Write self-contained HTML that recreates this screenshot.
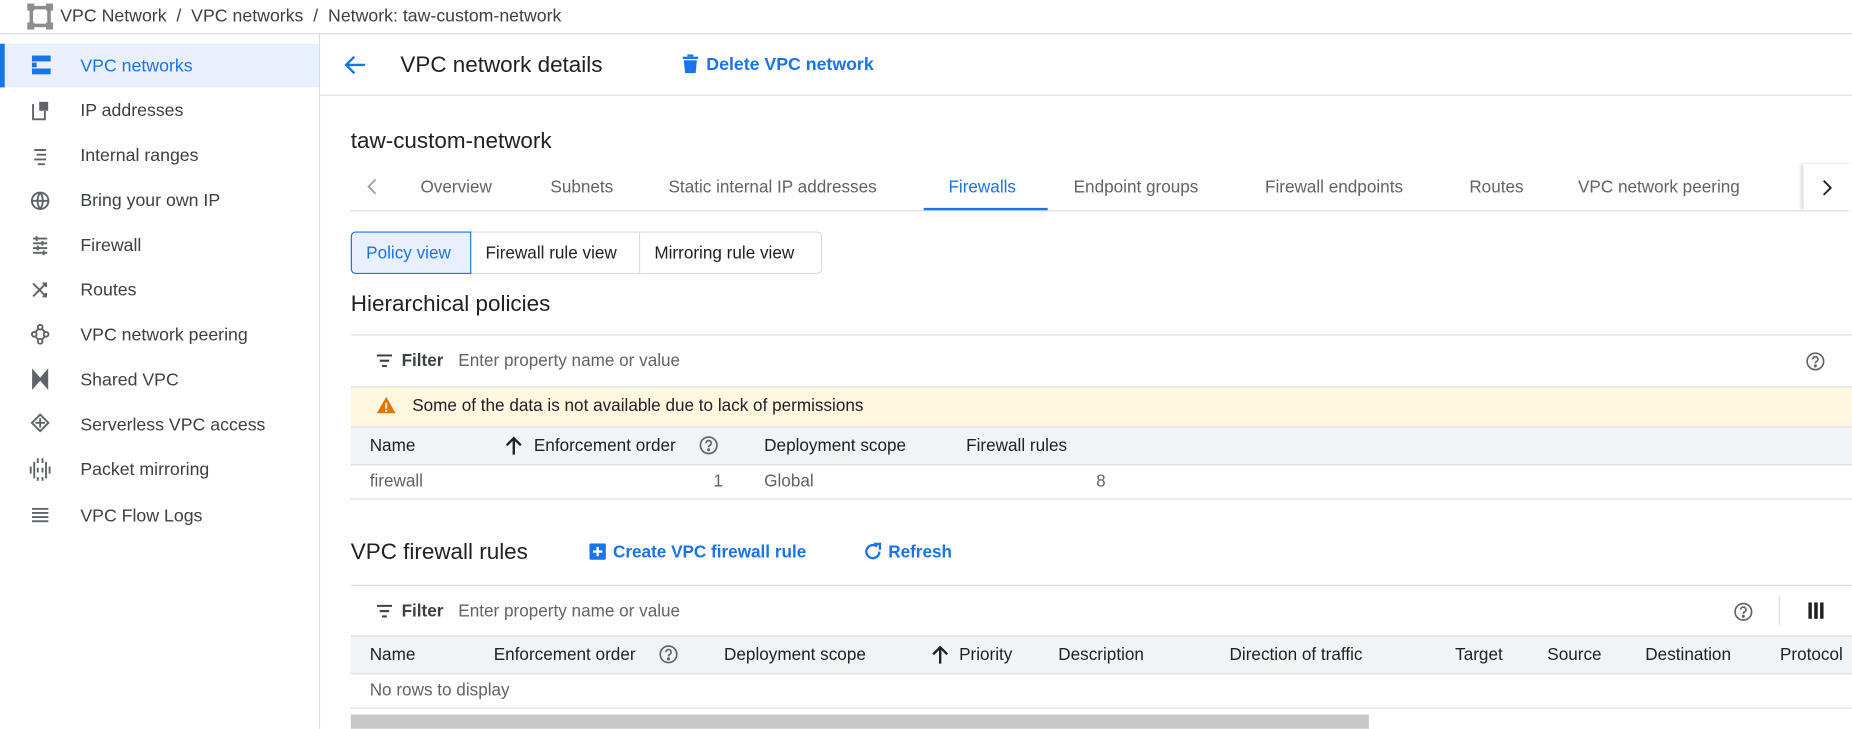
<!DOCTYPE html>
<html><head><meta charset="utf-8"><style>
html,body{margin:0;padding:0;width:1852px;height:728px;overflow:hidden;background:#fff}
#w{position:absolute;left:0;top:0;width:1568px;height:617px;transform:scale(1.18112);transform-origin:0 0;font-family:"Liberation Sans",Arial,sans-serif;color:#202124;font-size:14.5px}
.a{position:absolute;white-space:nowrap}
.c{transform:translateY(-45%)}
.hl{position:absolute;height:1px;background:#dadce0}
.blue{color:#1a73e8}
.g{color:#5f6368}
svg{display:block}
</style></head><body><div id="w">
<!-- breadcrumb -->
<svg class="a" style="left:23px;top:3px" width="22" height="22" viewBox="0 0 22 22"><g fill="#8a8d91"><rect x="0" y="0" width="6" height="6"/><rect x="16" y="0" width="6" height="6"/><rect x="0" y="16" width="6" height="6"/><rect x="16" y="16" width="6" height="6"/><rect x="2" y="5" width="3" height="12"/><rect x="17" y="5" width="3" height="12"/><rect x="5" y="2" width="12" height="3"/><rect x="5" y="17" width="12" height="3"/></g></svg>
<div class="a c" style="left:51px;top:13px;font-size:15px;color:#3c4043">VPC Network &nbsp;/&nbsp; VPC networks &nbsp;/&nbsp; Network: taw-custom-network</div>
<div class="hl" style="left:0;top:28px;width:1568px"></div>
<!-- sidebar -->
<div class="a" style="left:0;top:29px;width:270px;height:588px;border-right:1px solid #dadce0"></div>
<div class="a" style="left:0;top:37px;width:270px;height:37px;background:#e8f0fe"></div>
<div class="a" style="left:0;top:37px;width:4px;height:37px;background:#1a73e8"></div>
<svg class="a" style="left:27px;top:47px" width="16" height="16" viewBox="0 0 16 16"><g fill="#1a73e8"><rect x="0" y="0" width="16" height="5"/><rect x="0" y="6" width="4" height="4"/><rect x="0" y="11" width="16" height="5"/></g></svg>
<div class="a c blue" style="left:68px;top:55px;font-size:15px">VPC networks</div>
<div class="a c" style="left:68px;top:93px;font-size:15px;color:#3c4043">IP addresses</div>
<div class="a c" style="left:68px;top:131px;font-size:15px;color:#3c4043">Internal ranges</div>
<div class="a c" style="left:68px;top:169px;font-size:15px;color:#3c4043">Bring your own IP</div>
<div class="a c" style="left:68px;top:207px;font-size:15px;color:#3c4043">Firewall</div>
<div class="a c" style="left:68px;top:245px;font-size:15px;color:#3c4043">Routes</div>
<div class="a c" style="left:68px;top:283px;font-size:15px;color:#3c4043">VPC network peering</div>
<div class="a c" style="left:68px;top:321px;font-size:15px;color:#3c4043">Shared VPC</div>
<div class="a c" style="left:68px;top:359px;font-size:15px;color:#3c4043">Serverless VPC access</div>
<div class="a c" style="left:68px;top:397px;font-size:15px;color:#3c4043">Packet mirroring</div>
<div class="a c" style="left:68px;top:436px;font-size:15px;color:#3c4043">VPC Flow Logs</div>
<svg class="a" style="left:25px;top:85px" width="18" height="330" viewBox="0 0 18 330" fill="none" stroke="#5f6368" stroke-width="1.6">
<path d="M3 3v13h10V9M9 2h6v6H9z" /><rect x="10" y="3" width="4" height="4" fill="#5f6368"/>
<path d="M4 42h10M6 46h8M4 50h10M7 54h6"/>
<circle cx="9" cy="85" r="7"/><path d="M2 85h14M9 78c-3 4-3 10 0 14M9 78c3 4 3 10 0 14"/>
<path d="M3 117h12M3 121h12M3 125h12M3 129h12M6 115v4M11 119v4M7 123v4M12 127v4"/>
<path d="M3 155l11 11M14 155l-11 11M11 155h3v3M11 166h3v-3"/>
<circle cx="9" cy="192" r="2"/><circle cx="4" cy="198" r="2"/><circle cx="14" cy="198" r="2"/><circle cx="9" cy="204" r="2"/><path d="M5 196l3-3M13 196l-3-3M5 200l3 3M13 200l-3 3"/>
<path d="M3 229v14l6-7zM15 229v14l-6-7z" fill="#5f6368"/>
<path d="M9 266l7 7-7 7-7-7zM5 273h8M9 269v8"/>
<path d="M1 310v6M4 306v14M7 303v4M7 311v4M7 319v3M11 303v4M11 311v4M11 319v3M14 306v14M17 310v6"/>
</svg>
<svg class="a" style="left:27px;top:430px" width="14" height="13" viewBox="0 0 14 13"><g fill="#5f6368"><rect y="0" width="14" height="1.6"/><rect y="3.5" width="14" height="1.6"/><rect y="7" width="14" height="1.6"/><rect y="10.5" width="14" height="1.6"/></g></svg>
<!-- header -->
<svg class="a" style="left:291px;top:46px" width="19" height="18" viewBox="0 0 19 18" fill="none" stroke="#1a73e8" stroke-width="2"><path d="M18 9H2M9 2L2 9l7 7"/></svg>
<div class="a c" style="left:339px;top:55px;font-size:19px">VPC network details</div>
<svg class="a" style="left:578px;top:46px" width="13" height="16" viewBox="0 0 13 16" fill="#1a73e8"><rect x="0" y="2" width="13" height="2"/><rect x="4" y="0" width="5" height="2"/><path d="M1 5h11l-1 11H2z"/></svg>
<div class="a c blue" style="left:598px;top:54px;font-size:15px;font-weight:bold">Delete VPC network</div>
<div class="hl" style="left:271px;top:80px;width:1297px"></div>
<div class="a c" style="left:297px;top:119px;font-size:19px">taw-custom-network</div>
<!-- tabs -->
<svg class="a" style="left:311px;top:151px" width="8" height="14" viewBox="0 0 8 14" fill="none" stroke="#9aa0a6" stroke-width="1.5"><path d="M7 1L1 7l6 6"/></svg>
<div class="a c g" style="left:356px;top:158px">Overview</div>
<div class="a c g" style="left:466px;top:158px">Subnets</div>
<div class="a c g" style="left:566px;top:158px">Static internal IP addresses</div>
<div class="a c blue" style="left:803px;top:158px">Firewalls</div>
<div class="a c g" style="left:909px;top:158px">Endpoint groups</div>
<div class="a c g" style="left:1071px;top:158px">Firewall endpoints</div>
<div class="a c g" style="left:1244px;top:158px">Routes</div>
<div class="a c g" style="left:1336px;top:158px">VPC network peering</div>
<div class="a" style="left:1527px;top:139px;width:41px;height:39px;background:#fff;box-shadow:-2px 0 3px rgba(0,0,0,.15)"></div>
<svg class="a" style="left:1543px;top:152px" width="8" height="14" viewBox="0 0 8 14" fill="none" stroke="#202124" stroke-width="1.6"><path d="M1 1l6 6-6 6"/></svg>
<div class="hl" style="left:297px;top:178px;width:1268px"></div>
<div class="a" style="left:782px;top:176px;width:105px;height:2px;background:#1a73e8"></div>
<!-- segmented -->
<div class="a" style="left:297px;top:196px;width:397px;height:34px;border:1px solid #dadce0;border-radius:4px"></div>
<div class="a" style="left:297px;top:196px;width:100px;height:34px;border:1px solid #1a73e8;background:#e8f0fe;border-radius:4px 0 0 4px"></div>
<div class="a" style="left:541px;top:197px;width:1px;height:34px;background:#dadce0"></div>
<div class="a c blue" style="left:310px;top:214px">Policy view</div>
<div class="a c" style="left:411px;top:214px">Firewall rule view</div>
<div class="a c" style="left:554px;top:214px">Mirroring rule view</div>
<div class="a c" style="left:297px;top:257px;font-size:19px">Hierarchical policies</div>
<!-- filter 1 -->
<div class="hl" style="left:297px;top:283px;width:1271px"></div>
<svg class="a" style="left:319px;top:300px" width="13" height="11" viewBox="0 0 13 11"><g fill="#3c4043"><rect width="13" height="1.8"/><rect x="2.5" y="4.5" width="8" height="1.8"/><rect x="4.5" y="9" width="4" height="1.8"/></g></svg>
<div class="a c" style="left:340px;top:305px;font-weight:bold;color:#3c4043">Filter</div>
<div class="a c g" style="left:388px;top:305px">Enter property name or value</div>
<svg class="a" style="left:1529px;top:298px" width="16" height="16" viewBox="0 0 16 16" fill="none" stroke="#5f6368" stroke-width="1.4"><circle cx="8" cy="8" r="7"/><path d="M5.8 6.2a2.2 2.2 0 1 1 3 2c-.7.3-.8.8-.8 1.5"/><circle cx="8" cy="11.8" r=".6" fill="#5f6368"/></svg>
<div class="a" style="left:297px;top:327px;width:1271px;height:34px;background:#fef7e0;border-top:1px solid #dadce0"></div>
<svg class="a" style="left:319px;top:336px" width="16" height="14" viewBox="0 0 16 14"><path d="M8 0l8 14H0z" fill="#e37400"/><rect x="7.2" y="5" width="1.6" height="5" fill="#fff"/><rect x="7.2" y="11" width="1.6" height="1.6" fill="#fff"/></svg>
<div class="a c" style="left:349px;top:343px">Some of the data is not available due to lack of permissions</div>
<div class="a" style="left:297px;top:361px;width:1271px;height:31px;background:#f1f3f4;border-top:1px solid #dadce0;border-bottom:1px solid #dadce0"></div>
<div class="a c" style="left:313px;top:377px">Name</div>
<svg class="a" style="left:428px;top:369px" width="14" height="16" viewBox="0 0 14 16" fill="none" stroke="#202124" stroke-width="2"><path d="M7 16V2M1 8l6-6 6 6"/></svg>
<div class="a c" style="left:452px;top:377px">Enforcement order</div>
<svg class="a" style="left:592px;top:369px" width="16" height="16" viewBox="0 0 16 16" fill="none" stroke="#5f6368" stroke-width="1.4"><circle cx="8" cy="8" r="7"/><path d="M5.8 6.2a2.2 2.2 0 1 1 3 2c-.7.3-.8.8-.8 1.5"/><circle cx="8" cy="11.8" r=".6" fill="#5f6368"/></svg>
<div class="a c" style="left:647px;top:377px">Deployment scope</div>
<div class="a c" style="left:818px;top:377px">Firewall rules</div>
<div class="a c g" style="left:313px;top:407px">firewall</div>
<div class="a c g" style="left:604px;top:407px">1</div>
<div class="a c g" style="left:647px;top:407px">Global</div>
<div class="a c g" style="left:928px;top:407px">8</div>
<div class="hl" style="left:297px;top:422px;width:1271px"></div>
<!-- VPC firewall rules -->
<div class="a c" style="left:297px;top:467px;font-size:19px">VPC firewall rules</div>
<svg class="a" style="left:499px;top:460px" width="14" height="14" viewBox="0 0 14 14"><rect width="14" height="14" rx="1.5" fill="#1a73e8"/><path d="M7 3v8M3 7h8" stroke="#fff" stroke-width="2"/></svg>
<div class="a c blue" style="left:519px;top:467px;font-weight:bold">Create VPC firewall rule</div>
<svg class="a" style="left:731px;top:459px" width="16" height="16" viewBox="0 0 16 16" fill="none" stroke="#1a73e8" stroke-width="2"><path d="M13.5 8A5.5 5.5 0 1 1 11.5 3.8"/><path d="M9 1.5h5v5" fill="none"/></svg>
<div class="a c blue" style="left:752px;top:467px;font-weight:bold">Refresh</div>
<div class="hl" style="left:297px;top:495px;width:1271px"></div>
<svg class="a" style="left:319px;top:512px" width="13" height="11" viewBox="0 0 13 11"><g fill="#3c4043"><rect width="13" height="1.8"/><rect x="2.5" y="4.5" width="8" height="1.8"/><rect x="4.5" y="9" width="4" height="1.8"/></g></svg>
<div class="a c" style="left:340px;top:517px;font-weight:bold;color:#3c4043">Filter</div>
<div class="a c g" style="left:388px;top:517px">Enter property name or value</div>
<svg class="a" style="left:1468px;top:510px" width="16" height="16" viewBox="0 0 16 16" fill="none" stroke="#5f6368" stroke-width="1.4"><circle cx="8" cy="8" r="7"/><path d="M5.8 6.2a2.2 2.2 0 1 1 3 2c-.7.3-.8.8-.8 1.5"/><circle cx="8" cy="11.8" r=".6" fill="#5f6368"/></svg>
<div class="a" style="left:1506px;top:505px;width:1px;height:24px;background:#dadce0"></div>
<svg class="a" style="left:1531px;top:510px" width="13" height="14" viewBox="0 0 13 14" fill="#202124"><rect x="0" y="0" width="3" height="14"/><rect x="5" y="0" width="3" height="14"/><rect x="10" y="0" width="3" height="14"/></svg>
<div class="a" style="left:297px;top:538px;width:1271px;height:31px;background:#f1f3f4;border-top:1px solid #dadce0;border-bottom:1px solid #dadce0"></div>
<div class="a c" style="left:313px;top:554px">Name</div>
<div class="a c" style="left:418px;top:554px">Enforcement order</div>
<svg class="a" style="left:558px;top:546px" width="16" height="16" viewBox="0 0 16 16" fill="none" stroke="#5f6368" stroke-width="1.4"><circle cx="8" cy="8" r="7"/><path d="M5.8 6.2a2.2 2.2 0 1 1 3 2c-.7.3-.8.8-.8 1.5"/><circle cx="8" cy="11.8" r=".6" fill="#5f6368"/></svg>
<div class="a c" style="left:613px;top:554px">Deployment scope</div>
<svg class="a" style="left:789px;top:546px" width="14" height="16" viewBox="0 0 14 16" fill="none" stroke="#202124" stroke-width="2"><path d="M7 16V2M1 8l6-6 6 6"/></svg>
<div class="a c" style="left:812px;top:554px">Priority</div>
<div class="a c" style="left:896px;top:554px">Description</div>
<div class="a c" style="left:1041px;top:554px">Direction of traffic</div>
<div class="a c" style="left:1232px;top:554px">Target</div>
<div class="a c" style="left:1310px;top:554px">Source</div>
<div class="a c" style="left:1393px;top:554px">Destination</div>
<div class="a c" style="left:1507px;top:554px">Protocol</div>
<div class="a c g" style="left:313px;top:584px">No rows to display</div>
<div class="hl" style="left:297px;top:599px;width:1271px"></div>
<div class="a" style="left:297px;top:605px;width:862px;height:12px;background:#c8c8c8"></div>
</div></body></html>
